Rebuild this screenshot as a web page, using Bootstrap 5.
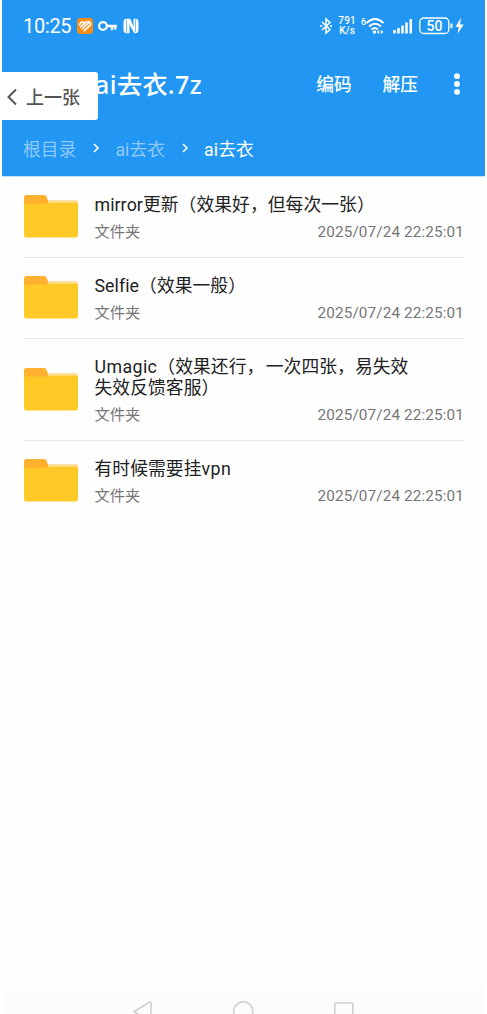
<!DOCTYPE html>
<html lang="zh-CN">
<head>
<meta charset="utf-8">
<meta name="viewport" content="width=device-width, initial-scale=1">
<title>ai去衣.7z</title>
<link href="https://cdn.jsdelivr.net/npm/bootstrap@5.3.0/dist/css/bootstrap.min.css" rel="stylesheet">
<style>
body{font-family:Roboto,"Noto Sans CJK SC",sans-serif;background:#fff;height:1014px;overflow:hidden}
.screen{height:1014px;margin:0 2px;background:#fefefe;overflow:hidden}
.app-head{height:177px;background:#2196f3;border-bottom:1px solid #c5e3fb;color:#fff}
.status{height:52px;padding:0 15px 0 21px}
.clock{font-size:20px;letter-spacing:-.3px;line-height:24px}
.speed{font-size:10px;line-height:10px;font-weight:500;letter-spacing:.2px}
.toolbar{height:64px;padding-left:93px}
.file-title{font-size:25px;line-height:36px;font-weight:500;letter-spacing:.45px;font-family:"Noto Sans","Noto Sans CJK SC",sans-serif}
.act{font-size:17.7px;line-height:24px;font-weight:500;color:#fff;padding-top:2px}
.crumbs{height:60px;padding:8px 0 0 21px;font-size:17.7px;line-height:24px;letter-spacing:.1px}
.crumbs .dim{color:#90caf9}
.prev{left:2px;top:72px;width:96px;height:48px;background:#fff;border-radius:0 3px 3px 0;color:#555;font-size:18px;font-weight:500;padding:2px 0 0 4px}
.entry{margin:0 21px;height:81px;padding-top:16.5px;border-bottom:1px solid #ece8e9}
.entry.tall{height:102px}
.entry:last-child{border:0}
.folder{width:54px;height:43px;margin:1px 16.5px 0 1px}
.tall .folder{margin-top:12px}
.entry-name{font-size:17.8px;line-height:21px;color:#222;white-space:nowrap;font-kerning:none;letter-spacing:.05px}
.entry-name .pause{letter-spacing:1.5px}
.entry-name .latin{letter-spacing:.4px}
.meta{font-size:15.3px;line-height:21px;margin-top:7px;color:#777}
.stamp{letter-spacing:.12px}
.sysnav{height:28px;background:#fcfcfc}
</style>
</head>
<body>
<svg width="0" height="0" class="position-absolute">
<symbol id="folder" viewBox="0 0 54 43">
<path d="M20 5h32q2 0 2 2v12H20z" fill="#ffe0a0"/>
<path d="M2.500 0H20q2 0 2.700 2L25 9v10H0V2.500Q0 0 2.500 0z" fill="#ffb02e"/>
<path d="M0 8.500h22q1.500 0 3-.6 1-.4 2-.4h25q2 0 2 2V40q0 2.500-2.500 2.500h-49Q0 42.500 0 40z" fill="#ffca28"/>
</symbol>
</svg>
<div class="screen d-flex flex-column">
<header class="app-head flex-shrink-0">
<div class="status d-flex align-items-center justify-content-between">
<div class="d-flex align-items-center">
<span class="clock">10:25</span>
<svg style="margin-left:5px" width="64" height="18" viewBox="0 0 64 18">
<rect x="1" y="1" width="16" height="16" rx="3.500" fill="#fb8c14"/>
<path d="M3.800 8Q4 5 6.500 5.200 8 5.300 9 6.500M4.800 10 9.500 5.500Q11.500 3.800 13.500 5M6.500 11.500l6.500-6M8.500 13.500 14 8.500q.8-1 .5-2.500" fill="none" stroke="#fff" stroke-width="1.700" stroke-linecap="round"/>
<circle cx="27" cy="9" r="3.900" fill="none" stroke="#fff" stroke-width="2.300"/>
<path d="M31 9H41M36 9v4.200M39.200 9v3.400" fill="none" stroke="#fff" stroke-width="2.300"/>
<path d="M54 2.200h-3.500Q48 2.200 48 4.500v9q0 2.300 2.500 2.300H53V6l5.500 9.800h1q2.500 0 2.500-2.300v-9q0-2.300-2.500-2.300H58V12z" fill="#fff" stroke="#fff" stroke-width="1"/>
<path d="M50.500 3v12.500M59.500 2.500V15" fill="none" stroke="#2196f3" stroke-width=".6"/>
</svg>
</div>
<div class="d-flex align-items-center">
<svg width="14" height="18" viewBox="0 0 14 18"><path d="M3 5l8 7.500L7 16V2l4 3.500L3 13" fill="none" stroke="#fff" stroke-width="1.500"/><circle cx="2.200" cy="9" r="1.100" fill="#fff"/><circle cx="12" cy="9" r="1.100" fill="#fff"/></svg>
<div class="speed text-center" style="margin-left:5px">791<br>K/s</div>
<svg style="margin-left:4px" width="110" height="22" viewBox="0 0 110 22">
<text x="1" y="10" font-size="9" font-weight="500" fill="#fff">6</text>
<g fill="none" stroke="#fff" stroke-width="1.900"><path d="M6.500 8Q15 0 23.500 8M9 11.500q6-5.500 12 0M11.500 14.500q3.300-2.800 6.500 0"/></g>
<circle cx="14.500" cy="17" r="1.800" fill="#fff"/><path d="M17 17l2.300-2.300v4.600zM23.300 17 21 14.700v4.600z" fill="#fff"/>
<path d="M34.500 15v3.500M38.500 13v5.500M42.500 10.500v8M46.500 7.500v11M50.800 4v14.500" stroke="#fff" stroke-width="2.500"/>
<rect x="59.800" y="3" width="29" height="15.500" rx="4" fill="none" stroke="#fff" stroke-width="1.300"/>
<text x="74.500" y="16" text-anchor="middle" font-size="14" font-weight="500" fill="#fff">50</text>
<path d="M91.500 8.500v4.500" stroke="#fff" stroke-width="2"/><path d="M101 2.500 95.500 12h3.300l-1.300 7 6.200-9.500h-3.700z" fill="#fff"/>
</svg>
</div>
</div>
<div class="toolbar d-flex align-items-center">
<div class="file-title">ai去衣.7z</div>
<div class="ms-auto d-flex align-items-center">
<span class="act">编码</span><span class="act" style="margin-left:31px">解压</span>
<svg style="margin:0 24px 0 35px" width="8" height="24" viewBox="0 0 8 24" fill="#fff"><circle cx="4" cy="4.200" r="2.900"/><circle cx="4" cy="12" r="2.900"/><circle cx="4" cy="19.800" r="2.900"/></svg>
</div>
</div>
<nav class="crumbs d-flex align-items-center">
<span class="dim">根目录</span>
<svg style="margin:0 15px 4px 16px" width="8" height="10" viewBox="0 0 8 10"><path d="M2 1l4 4-4 4" fill="none" stroke="#fff" stroke-width="1.600"/></svg>
<span class="dim">ai去衣</span>
<svg style="margin:0 15px 4px 16px" width="8" height="10" viewBox="0 0 8 10"><path d="M2 1l4 4-4 4" fill="none" stroke="#fff" stroke-width="1.600"/></svg>
<span>ai去衣</span>
</nav>
</header>
<main class="flex-grow-1">
<div class="entry d-flex"><svg class="folder flex-shrink-0"><use href="#folder"/></svg><div class="flex-grow-1"><div class="entry-name">mirror更新（效果好，但每次一张）</div><div class="meta d-flex justify-content-between"><span>文件夹</span><span class="stamp">2025/07/24 22:25:01</span></div></div></div>
<div class="entry d-flex"><svg class="folder flex-shrink-0"><use href="#folder"/></svg><div class="flex-grow-1"><div class="entry-name">Selfie（效果一般）</div><div class="meta d-flex justify-content-between"><span>文件夹</span><span class="stamp">2025/07/24 22:25:01</span></div></div></div>
<div class="entry tall d-flex"><svg class="folder flex-shrink-0"><use href="#folder"/></svg><div class="flex-grow-1"><div class="entry-name"><span class="latin">Umagic</span>（效果还行<span class="pause">，</span>一次四张，易失效<br>失效反馈客服）</div><div class="meta d-flex justify-content-between"><span>文件夹</span><span class="stamp">2025/07/24 22:25:01</span></div></div></div>
<div class="entry d-flex"><svg class="folder flex-shrink-0"><use href="#folder"/></svg><div class="flex-grow-1"><div class="entry-name">有时候需要挂<span class="latin">vpn</span></div><div class="meta d-flex justify-content-between"><span>文件夹</span><span class="stamp">2025/07/24 22:25:01</span></div></div></div>
</main>
<footer class="sysnav flex-shrink-0">
<svg width="483" height="28" viewBox="2 986 483 28" class="d-block" fill="none" stroke="#cfcfcf" stroke-width="1.600"><path d="M151 1022v-19q0-1.500-1.500-.7L134 1011.500l17 10.500"/><circle cx="243.300" cy="1011.500" r="9.700"/><rect x="334.800" y="1003" width="18" height="18" rx="1"/></svg>
</footer>
</div>
<button class="prev position-absolute border-0 d-flex align-items-center"><svg width="12" height="18" viewBox="0 0 12 18"><path d="M10 1.500 2.500 9l7.500 7.500" fill="none" stroke="#555" stroke-width="2"/></svg><span style="margin-left:8px">上一张</span></button>
<script src="https://cdn.jsdelivr.net/npm/bootstrap@5.3.0/dist/js/bootstrap.bundle.min.js"></script>
</body>
</html>
